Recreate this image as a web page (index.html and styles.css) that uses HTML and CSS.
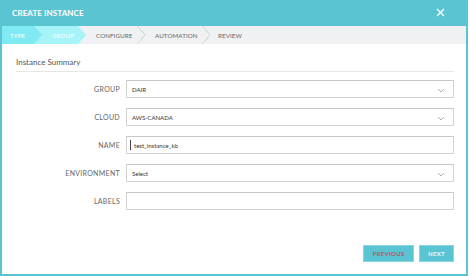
FILE: index.html
```html
<!DOCTYPE html>
<html>
<head>
<meta charset="utf-8">
<link rel="stylesheet" href="styles.css">
</head>
<body>
<div class="modal">
  <div class="header">
    <span class="title">CREATE INSTANCE</span>
    <svg class="close" width="9" height="9" viewBox="0 0 9 9"><path d="M1 1L8 8M8 1L1 8" stroke="#fff" stroke-width="1.3"/></svg>
  </div>
  <div class="steps">
    <div class="step s-type">TYPE</div>
    <div class="step s-group">GROUP</div>
    <div class="step s-plain s-conf">CONFIGURE</div>
    <div class="step s-plain s-auto">AUTOMATION</div>
    <div class="step s-plain s-rev">REVIEW</div>
  </div>
  <div class="body">
    <div class="section">Instance Summary</div>
    <div class="form">
      <div class="row"><label>GROUP</label><div class="field">DAIR<svg class="chev" width="8" height="5" viewBox="0 0 8 5"><path d="M1 1L4 4L7 1" fill="none" stroke="#999" stroke-width="0.8"/></svg></div></div>
      <div class="row"><label>CLOUD</label><div class="field">AWS-CANADA<svg class="chev" width="8" height="5" viewBox="0 0 8 5"><path d="M1 1L4 4L7 1" fill="none" stroke="#999" stroke-width="0.8"/></svg></div></div>
      <div class="row"><label>NAME</label><div class="field text"><span class="caret"></span>test_instance_kb</div></div>
      <div class="row"><label>ENVIRONMENT</label><div class="field">Select<svg class="chev" width="8" height="5" viewBox="0 0 8 5"><path d="M1 1L4 4L7 1" fill="none" stroke="#999" stroke-width="0.8"/></svg></div></div>
      <div class="row"><label>LABELS</label><div class="field"></div></div>
    </div>
    <div class="buttons">
      <button class="btn prev">PREVIOUS</button>
      <button class="btn next">NEXT</button>
    </div>
  </div>
</div>
</body>
</html>
```
FILE: styles.css
```css
html, body { margin: 0; padding: 0; background: #fff; }
body { width: 470px; height: 276px; font-family: Lato, "Open Sans", sans-serif; overflow: hidden; }
.modal {
  width: 468px; height: 276px; box-sizing: border-box;
  border-left: 2px solid #5bc4d2; border-right: 2px solid #5bc4d2; border-bottom: 2px solid #5bc4d2;
  display: flex; flex-direction: column;
}
.header {
  height: 26px; background: #5bc4d2; margin-left: -2px; margin-right: -2px;
  display: flex; align-items: center; justify-content: space-between;
  padding: 0 23px 0 12px; box-sizing: border-box;
}
.title { color: #fff; font-size: 8px; font-weight: 700; letter-spacing: 0.1px; }
.close { display: block; margin-top: -1px; }
.steps {
  height: 18px; background: #f0f1f3; display: flex; align-items: stretch;
  font-size: 6.2px; color: #666; letter-spacing: 0.1px; position: relative;
}
.step { display: flex; align-items: center; position: relative; box-sizing: border-box; }
.s-type {
  background: #80eaf4; color: #fff; padding-left: 8px;
  clip-path: polygon(0 0, 32px 0, 40px 50%, 32px 100%, 0 100%);
  width: 40px; z-index: 2;
}
.s-group {
  background: #a6f3f8; color: #fff; margin-left: -8px; padding-left: 18px; width: 52px;
  clip-path: polygon(0 0, 44px 0, 52px 50%, 44px 100%, 0 100%);
  z-index: 1;
}
.s-plain::after {
  content: ""; position: absolute; right: 0; top: 0; width: 8px; height: 18px;
  background: linear-gradient(to top right, transparent 46%, #d8d9dc 48%, #d8d9dc 54%, transparent 56%) top/8px 9px no-repeat,
              linear-gradient(to bottom right, transparent 46%, #d8d9dc 48%, #d8d9dc 54%, transparent 56%) bottom/8px 9px no-repeat;
}
.s-conf { padding-left: 10px; width: 59px; }
.s-auto { padding-left: 10px; width: 65px; }
.s-rev { padding-left: 8px; }
.s-rev::after { display: none; }
.body { flex: 1; display: flex; flex-direction: column; padding: 0 12px 0 14px; }
.section {
  margin-top: 13px; font-size: 8px; color: #555; padding-bottom: 4px;
  border-bottom: 1px solid #e6e6e6;
}
.form { display: flex; flex-direction: column; gap: 10px; margin-top: 8px; }
.row { display: flex; align-items: center; height: 18px; }
.row label {
  width: 104px; text-align: right; font-size: 7px; color: #666; letter-spacing: 0.3px;
  margin-right: 6px;
}
.field {
  flex: 1; height: 18px; box-sizing: border-box; border: 1px solid #d2d2d2;
  border-top-color: #c8c8c8;
  font-size: 6px; color: #333; display: flex; align-items: center; padding-left: 5px;
  position: relative; background: #fff;
}
.chev { position: absolute; right: 8px; top: 7px; }
.field.text { padding-left: 3px; }
.caret { width: 1px; height: 10px; background: #444; margin-right: 3px; }
.buttons { display: flex; justify-content: flex-end; gap: 5px; margin-top: auto; margin-bottom: 12px; }
.btn {
  border: 1px solid #8ad6e0; background: #5bc4d2; height: 17px; padding: 0;
  font-family: Lato, "Open Sans", sans-serif; font-size: 6px; font-weight: 700;
  letter-spacing: 0.3px;
}
.prev { width: 51px; color: #b8566c; }
.next { width: 35px; color: #e8fbff; }
```
